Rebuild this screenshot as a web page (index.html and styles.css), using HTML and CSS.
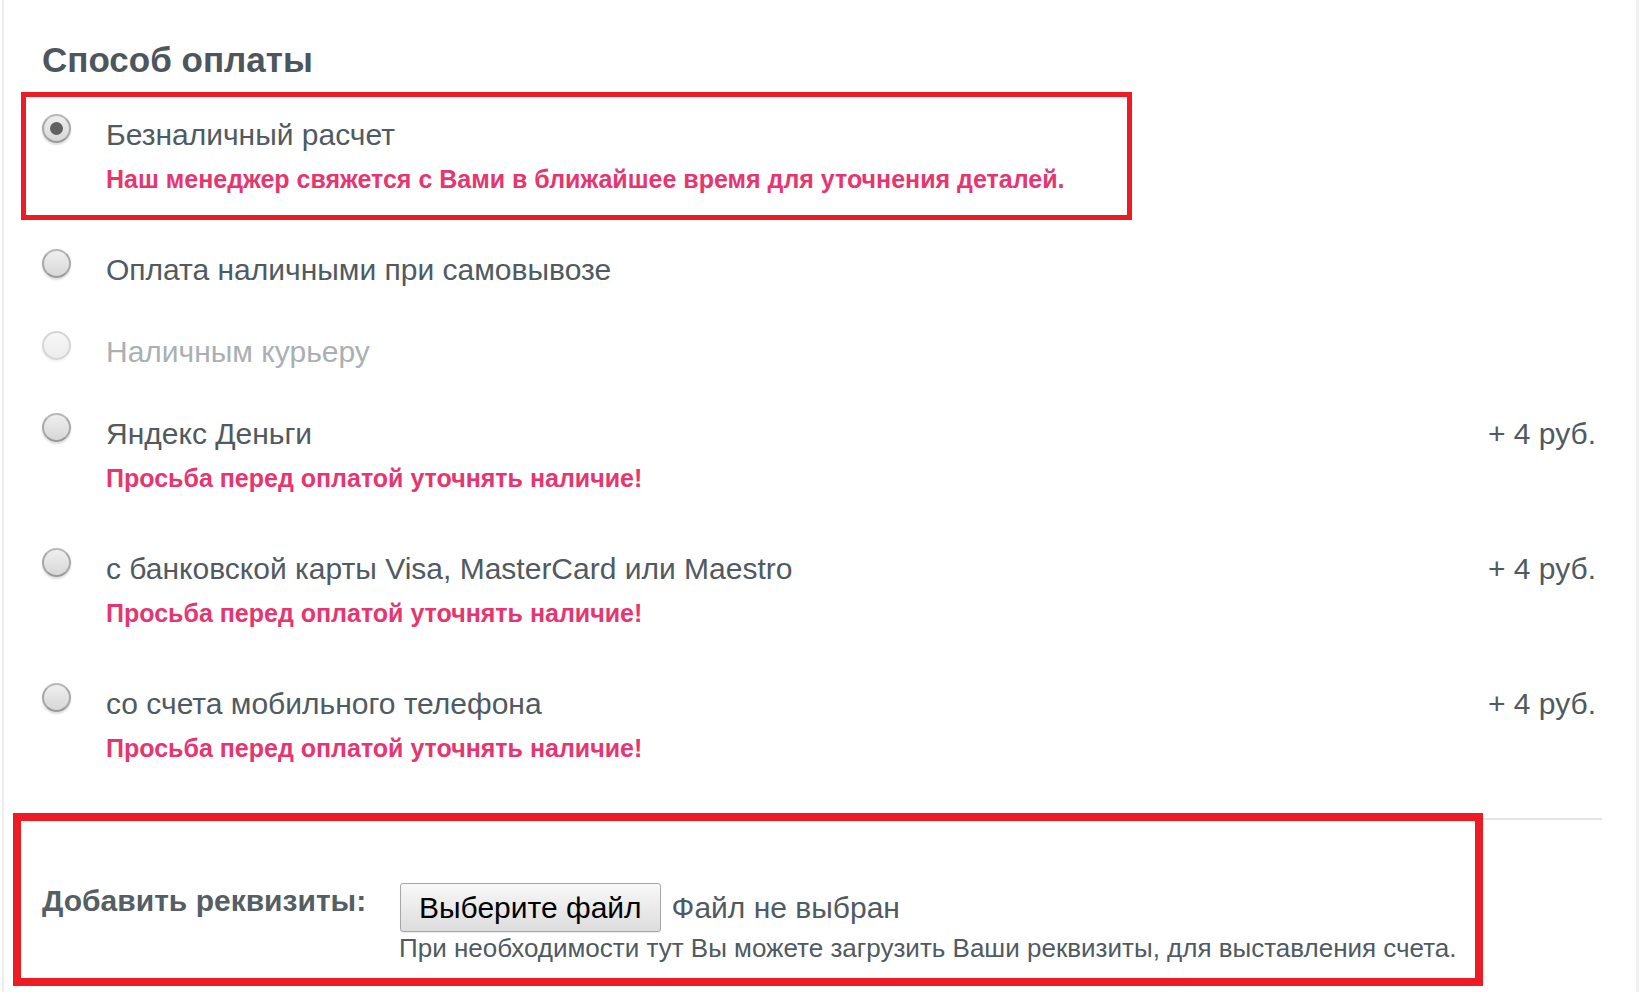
FILE: index.html
```html
<!DOCTYPE html>
<html lang="ru">
<head>
<meta charset="utf-8">
<title>Способ оплаты</title>
<link rel="stylesheet" href="styles.css">
</head>
<body>
<div class="panel">
  <h2 class="title">Способ оплаты</h2>
  <div class="options">
    <div class="option marked">
      <div class="row"><span class="radio checked"></span><span class="label">Безналичный расчет</span></div>
      <div class="note">Наш менеджер свяжется с Вами в ближайшее время для уточнения деталей.</div>
      <span class="mark mark-top"></span>
    </div>
    <div class="option">
      <div class="row"><span class="radio"></span><span class="label">Оплата наличными при самовывозе</span></div>
    </div>
    <div class="option disabled">
      <div class="row"><span class="radio"></span><span class="label">Наличным курьеру</span></div>
    </div>
    <div class="option">
      <div class="row"><span class="radio"></span><span class="label">Яндекс Деньги</span><span class="price">+ 4 руб.</span></div>
      <div class="note">Просьба перед оплатой уточнять наличие!</div>
    </div>
    <div class="option">
      <div class="row"><span class="radio"></span><span class="label">с банковской карты Visa, MasterCard или Maestro</span><span class="price">+ 4 руб.</span></div>
      <div class="note">Просьба перед оплатой уточнять наличие!</div>
    </div>
    <div class="option">
      <div class="row"><span class="radio"></span><span class="label">со счета мобильного телефона</span><span class="price">+ 4 руб.</span></div>
      <div class="note">Просьба перед оплатой уточнять наличие!</div>
    </div>
  </div>
  <div class="requisites">
    <div class="req-label">Добавить реквизиты:</div>
    <div class="req-body">
      <div class="file-row"><button class="file-btn" type="button">Выберите файл</button><span class="file-name">Файл не выбран</span></div>
      <div class="req-hint">При необходимости тут Вы можете загрузить Ваши реквизиты, для выставления счета.</div>
    </div>
    <span class="mark mark-bottom"></span>
  </div>
</div>
</body>
</html>
```

FILE: styles.css
```css
html, body {
  margin: 0;
  padding: 0;
  background: #ffffff;
}

body {
  font-family: "Liberation Sans", Arial, sans-serif;
  color: #4f5a61;
  overflow: hidden;
}

.panel {
  margin: 0 5px 0 2px;
  border-left: 2px solid #eeeeee;
  border-right: 3px solid #f0f0f0;
  min-height: 992px;
  padding: 0 40px 0 38px;
  box-sizing: border-box;
}

.title {
  margin: 0;
  padding-top: 40px;
  font-size: 35px;
  line-height: 40px;
  font-weight: bold;
  color: #4c565c;
}

.options {
  margin-top: 37px;
}

.option {
  position: relative;
  padding-bottom: 46px;
}

.row {
  display: flex;
  align-items: flex-start;
  font-size: 30px;
  line-height: 36px;
}

.radio {
  flex: 0 0 auto;
  width: 29px;
  height: 29px;
  margin-top: -3px;
  margin-right: 35px;
  border-radius: 50%;
  box-sizing: border-box;
  border: 2px solid #a8a8a8;
  border-color: #b8b8b8 #a8a8a8 #9a9a9a #a8a8a8;
  background: linear-gradient(#efefef, #d7d7d7);
  box-shadow: 0 2px 2px rgba(0, 0, 0, 0.13);
  display: grid;
  place-items: center;
}

.radio.checked::after {
  content: "";
  width: 13px;
  height: 13px;
  border-radius: 50%;
  background: #616161;
}

.label {
  flex: 1 1 auto;
}

.price {
  flex: 0 0 auto;
}

.disabled .label {
  color: #a9b0b4;
}

.disabled .radio {
  border-color: #d6d6d6;
  background: linear-gradient(#f7f7f7, #ececec);
  box-shadow: 0 2px 2px rgba(0, 0, 0, 0.05);
}

.note {
  margin: 11px 0 12px 64px;
  font-size: 25px;
  line-height: 30px;
  font-weight: bold;
  color: #e6356f;
}

.mark {
  position: absolute;
  box-sizing: border-box;
  border-style: solid;
  border-color: #ed1c24;
  pointer-events: none;
}

.mark-top {
  left: -21px;
  top: -25px;
  width: 1111px;
  height: 128px;
  border-width: 5px;
}

.requisites {
  position: relative;
  display: flex;
  align-items: flex-start;
  margin: -3px -6px 0 -27px;
  padding: 63px 0 0 27px;
  border-top: 2px solid #e4e4e4;
}

.req-label {
  flex: 0 0 358px;
  font-size: 30px;
  line-height: 36px;
  font-weight: bold;
  color: #555e63;
}

.req-body {
  display: flex;
  flex-direction: column;
}

.file-row {
  display: flex;
  align-items: center;
}

.file-btn {
  font-family: "Liberation Sans", Arial, sans-serif;
  font-size: 30px;
  line-height: 32px;
  height: 49px;
  padding: 0 18px;
  color: #000000;
  border: 1px solid #a6a6a6;
  border-radius: 3px;
  background: linear-gradient(#f8f8f8, #dddddd);
  box-shadow: 0 1px 1px rgba(0, 0, 0, 0.08);
}

.file-name {
  margin-left: 11px;
  font-size: 30px;
  line-height: 36px;
}

.req-hint {
  font-size: 26px;
  line-height: 28px;
  margin: 2px 0 0 -1px;
}

.mark-bottom {
  left: -2px;
  top: -7px;
  width: 1470px;
  height: 173px;
  border-width: 8px;
}
```
